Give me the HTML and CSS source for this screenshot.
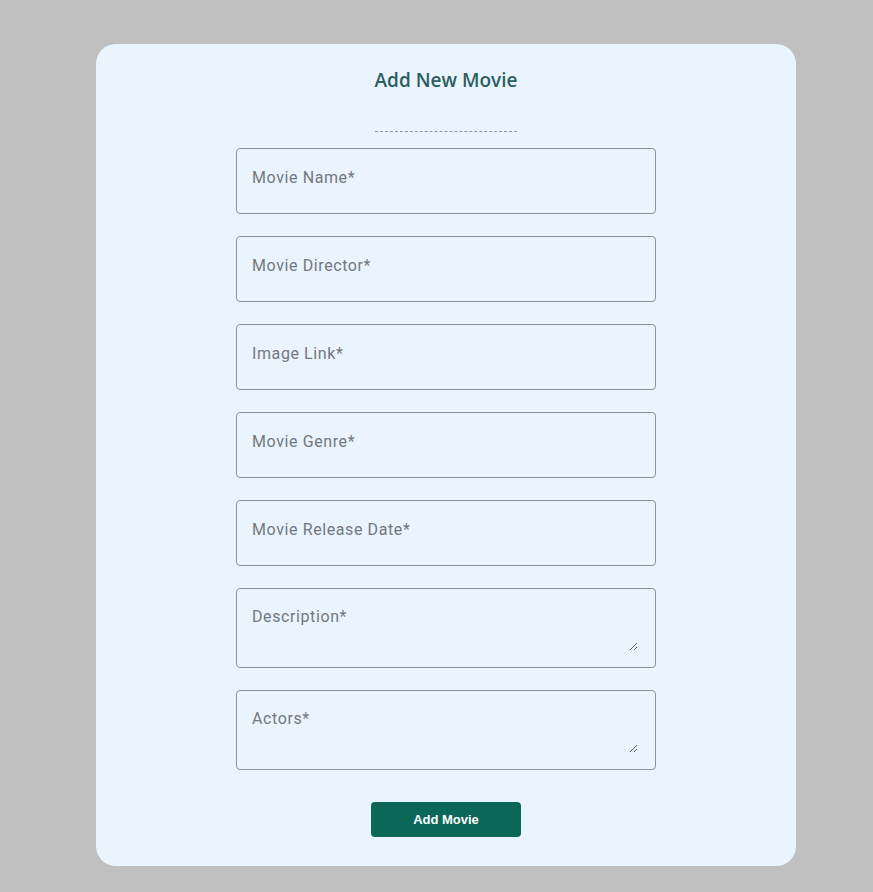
FILE: index.html
```html
<!DOCTYPE html>
<html lang="en">
<head>
<meta charset="utf-8">
<title>Add New Movie</title>
<link rel="stylesheet" href="styles.css">
</head>
<body>
<div class="card">
  <div class="head"><h2 class="title">Add New Movie</h2></div>
  <form class="form">
    <input class="field" type="text" placeholder="Movie Name*">
    <input class="field" type="text" placeholder="Movie Director*">
    <input class="field" type="text" placeholder="Image Link*">
    <input class="field" type="text" placeholder="Movie Genre*">
    <input class="field" type="text" placeholder="Movie Release Date*">
    <div class="area-box"><textarea class="area" placeholder="Description*"></textarea></div>
    <div class="area-box"><textarea class="area" placeholder="Actors*"></textarea></div>
    <button class="btn" type="button">Add Movie</button>
  </form>
</div>
</body>
</html>
```
FILE: styles.css
```css
html, body { margin: 0; padding: 0; }
body {
  background: #c0c0c0;
  padding: 44px 0 26px 96px;
  font-family: Roboto, "Liberation Sans", sans-serif;
}
.card {
  width: 700px;
  height: 822px;
  box-sizing: border-box;
  background: #eaf4fe;
  border-radius: 20px;
  padding-top: 23px;
}
.head { display: flex; justify-content: center; }
.title {
  margin: 0;
  font-family: "Open Sans", "Noto Sans", sans-serif;
  font-weight: 600;
  font-size: 19px;
  line-height: 27px;
  color: #2e5e60;
  padding-bottom: 37px;
  border-bottom: 1px dashed #8b99a3;
}
.form {
  display: flex;
  flex-direction: column;
  align-items: center;
  gap: 22px;
  margin-top: 16px;
}
.field, .area-box {
  width: 420px;
  box-sizing: border-box;
  border: 1px solid #8c9099;
  border-radius: 4px;
  background: #eaf4fe;
  margin: 0;
}
.field {
  height: 66px;
  padding: 16px 15px 24px;
  font-family: Roboto, sans-serif;
  font-size: 16px;
  color: #333;
  outline: none;
}
.area-box {
  height: 80px;
  padding: 16px 17px 16px 15px;
  display: flex;
}
.area {
  flex: 1;
  height: 46px;
  box-sizing: border-box;
  margin: 0;
  padding: 0;
  border: none;
  background: transparent;
  outline: none;
  resize: vertical;
  font-family: Roboto, sans-serif;
  font-size: 16px;
  line-height: 24px;
  color: #333;
}
.field::placeholder, .area::placeholder { color: #72787f; letter-spacing: 0.6px; }
.btn {
  margin-top: 10px;
  width: 150px;
  height: 35px;
  border: none;
  border-radius: 4px;
  background: #0b6757;
  color: #fff;
  font-family: "Liberation Sans", Arial, sans-serif;
  font-weight: 700;
  font-size: 13px;
}
```
